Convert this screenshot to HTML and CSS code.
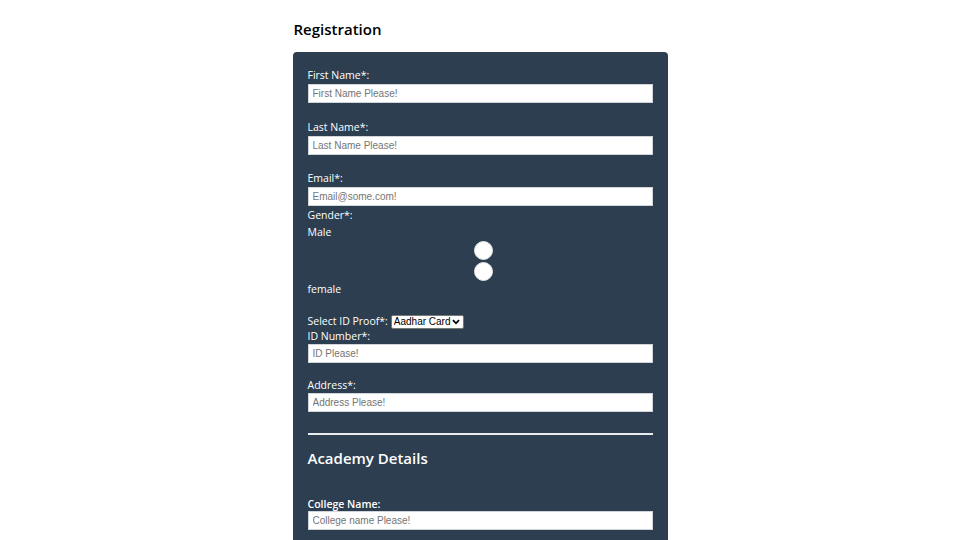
FILE: index.html
```html
<!DOCTYPE html>
<html>
<head>
<meta charset="utf-8">
<link rel="stylesheet" href="styles.css">
</head>
<body>
<div class="page">
  <h2 class="title">Registration</h2>
  <form class="card">
    <div class="field">
      <label class="lbl">First Name*:</label>
      <input class="txt" type="text" placeholder="First Name Please!">
    </div>
    <div class="field">
      <label class="lbl">Last Name*:</label>
      <input class="txt" type="text" placeholder="Last Name Please!">
    </div>
    <div class="field tight">
      <label class="lbl">Email*:</label>
      <input class="txt" type="text" placeholder="Email@some.com!">
    </div>
    <div class="gender">
      <label class="lbl">Gender*:</label>
      <label class="lbl">Male</label>
      <input class="radio first" type="radio" name="g">
      <input class="radio" type="radio" name="g">
      <label class="lbl">female</label>
    </div>
    <div class="idproof">
      <label class="lbl">Select ID Proof*:</label>
      <select class="sel"><option>Aadhar Card</option></select>
    </div>
    <div class="field idnum">
      <label class="lbl short">ID Number*:</label>
      <input class="txt" type="text" placeholder="ID Please!">
    </div>
    <div class="field">
      <label class="lbl short">Address*:</label>
      <input class="txt" type="text" placeholder="Address Please!">
    </div>
    <hr class="rule">
    <h3 class="sub">Academy Details</h3>
    <div class="field">
      <label class="lbl bold">College Name:</label>
      <input class="txt" type="text" placeholder="College name Please!">
    </div>
  </form>
</div>
</body>
</html>
```
FILE: styles.css
```css
html, body {
  margin: 0;
  padding: 0;
  background: #ffffff;
  font-family: "Open Sans", "Liberation Sans", sans-serif;
}
.page {
  width: 375px;
  margin: 0 auto;
  padding-top: 19px;
}
.title {
  margin: 0 0 13px 1px;
  font-size: 15px;
  font-weight: 600;
  line-height: 20px;
  color: #000;
}
.card {
  background: #2c3e50;
  border-radius: 4px;
  padding: 15px 15px 20px;
  color: #ffffff;
}
.field {
  display: flex;
  flex-direction: column;
  margin-bottom: 15.5px;
}
.field.tight {
  margin-bottom: 0;
}
.field.idnum {
  margin-bottom: 15px;
}
.lbl {
  display: block;
  font-size: 10.5px;
  line-height: 17px;
  color: #ffffff;
}
.lbl.short {
  line-height: 15px;
}
.lbl.bold {
  font-weight: 600;
  line-height: 14px;
}
.txt {
  box-sizing: border-box;
  width: 100%;
  height: 19px;
  margin: 0;
  padding: 0 4px;
  border: 1px solid #cfd5db;
  background: #fff;
  font-family: "Liberation Sans", Arial, sans-serif;
  font-size: 10px;
  color: #333;
  outline: none;
}
.txt::placeholder {
  color: #757575;
}
.gender {
  display: flex;
  flex-direction: column;
  padding-top: 1px;
}
.radio {
  appearance: none;
  -webkit-appearance: none;
  align-self: center;
  width: 19px;
  height: 19px;
  margin: 2px 0 0 7px;
  border-radius: 50%;
  background: #ffffff;
  border: 1px solid #e6e6e6;
  box-sizing: border-box;
}
.radio.first {
  margin-top: 0;
}
.idproof {
  margin-top: 16.5px;
  display: flex;
  align-items: center;
  gap: 3px;
  height: 14px;
}
.sel {
  appearance: none;
  -webkit-appearance: none;
  box-sizing: border-box;
  font-family: "Liberation Sans", Arial, sans-serif;
  font-size: 10px;
  width: 73px;
  height: 14px;
  padding: 0 0 0 2px;
  border: 1px solid #767676;
  border-radius: 2px;
  background-color: #fff;
  background-image: url("data:image/svg+xml,%3Csvg xmlns='http://www.w3.org/2000/svg' width='8' height='6' viewBox='0 0 8 6'%3E%3Cpath d='M1 1.2 L4 4.3 L7 1.2' fill='none' stroke='%23000' stroke-width='1.8'/%3E%3C/svg%3E");
  background-repeat: no-repeat;
  background-position: right 3px center;
  color: #000;
  line-height: 12px;
}
.rule {
  margin: 21px 0 0;
  border: 0;
  border-top: 2px solid #e8ecef;
}
.sub {
  margin: 13px 0 29px;
  font-size: 15px;
  font-weight: 600;
  line-height: 20px;
}
```
